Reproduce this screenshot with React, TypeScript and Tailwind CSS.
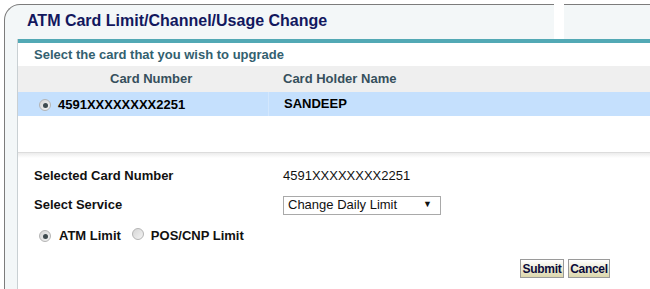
function Radio({ checked }: { checked?: boolean }) {
  return (
    <span className="relative inline-flex h-[12px] w-[12px] shrink-0 items-center justify-center rounded-full border border-[#b4b4b4] bg-gradient-to-br from-[#d6d6d6] to-[#f4f4f4]">
      {checked && <span className="h-[5px] w-[5px] rounded-full bg-[#3e4a4e]" />}
    </span>
  )
}

export default function App() {
  return (
    <div className="h-[289px] w-[650px] overflow-hidden bg-white pl-1 pt-1 font-['Liberation_Sans',Arial,sans-serif]">
      <div className="flex h-[35px]">
        <div className="w-[550px] rounded-tl-[16px] border-l border-t border-[#7c7c7c] bg-[#f3f7f8] pl-[22px] pt-[7px]">
          <h1 className="text-[16px] font-bold leading-[18px] text-[#12185e]">
            ATM Card Limit/Channel/Usage Change
          </h1>
        </div>
        <div className="w-[10px]" />
        <div className="flex-1 border-t border-[#7c7c7c] bg-[#f3f7f8]" />
      </div>

      <div className="h-[260px] border-l border-[#7c7c7c] bg-[#f3f7f8] pl-3">
        <div className="h-full border-l border-[#c9d0d3] bg-white">
          <div className="h-1 bg-[#52a9b5]" />

          <p className="flex h-[23px] items-center pl-4 text-[13px] font-bold text-[#33606f]">
            Select the card that you wish to upgrade
          </p>

          <div className="flex h-[26px] items-center bg-[#efefef] text-[13px] font-bold text-[#364f5c]">
            <div className="w-[251px] pl-[92px]">Card Number</div>
            <div className="pl-[14px]">Card Holder Name</div>
          </div>

          <div className="flex h-[24px] bg-[#c5e0fd] text-[13px] font-bold text-black">
            <div className="flex w-[251px] items-center gap-[7px] border-r border-[#d3e7fd] pl-[21px] pt-[2px]">
              <Radio checked />
              <span>4591XXXXXXXX2251</span>
            </div>
            <div className="flex items-center pl-[15px]">SANDEEP</div>
          </div>

          <div className="h-[36px]" />
          <div className="h-[6px] border-t border-[#dcdcdc] bg-gradient-to-b from-[#ececec] to-white" />

          <div className="pl-4 text-[13px] text-[#111]">
            <div className="flex h-[26px] items-center pt-[10px]">
              <span className="w-[249px] font-bold">Selected Card Number</span>
              <span>4591XXXXXXXX2251</span>
            </div>
            <div className="flex h-[30px] items-center pt-[12px]">
              <span className="w-[249px] font-bold">Select Service</span>
              <div className="flex h-[19px] w-[158px] items-center justify-between border border-[#a9a9a9] bg-white pl-[4px] pr-[8px] text-[#111]">
                <span>Change Daily Limit</span>
                <span className="text-[9px]">▼</span>
              </div>
            </div>
            <div className="flex h-[33px] items-center pl-[5px] pt-[11px] font-bold">
              <Radio checked />
              <span className="ml-[8px]">ATM Limit</span>
              <span className="ml-[11px]">
                <Radio />
              </span>
              <span className="ml-[7px]">POS/CNP Limit</span>
            </div>
            <div className="flex justify-end gap-[4px] pr-[40px] pt-[12px]">
              <button className="h-[19px] w-[44px] border border-[#9a9a9a] bg-gradient-to-b from-white to-[#dcd7ac] text-[12px] font-bold leading-none tracking-[-0.3px] text-[#0b0b3a]">
                Submit
              </button>
              <button className="h-[19px] w-[42px] border border-[#9a9a9a] bg-gradient-to-b from-white to-[#dcd7ac] text-[12px] font-bold leading-none tracking-[-0.3px] text-[#0b0b3a]">
                Cancel
              </button>
            </div>
          </div>
        </div>
      </div>
    </div>
  )
}
